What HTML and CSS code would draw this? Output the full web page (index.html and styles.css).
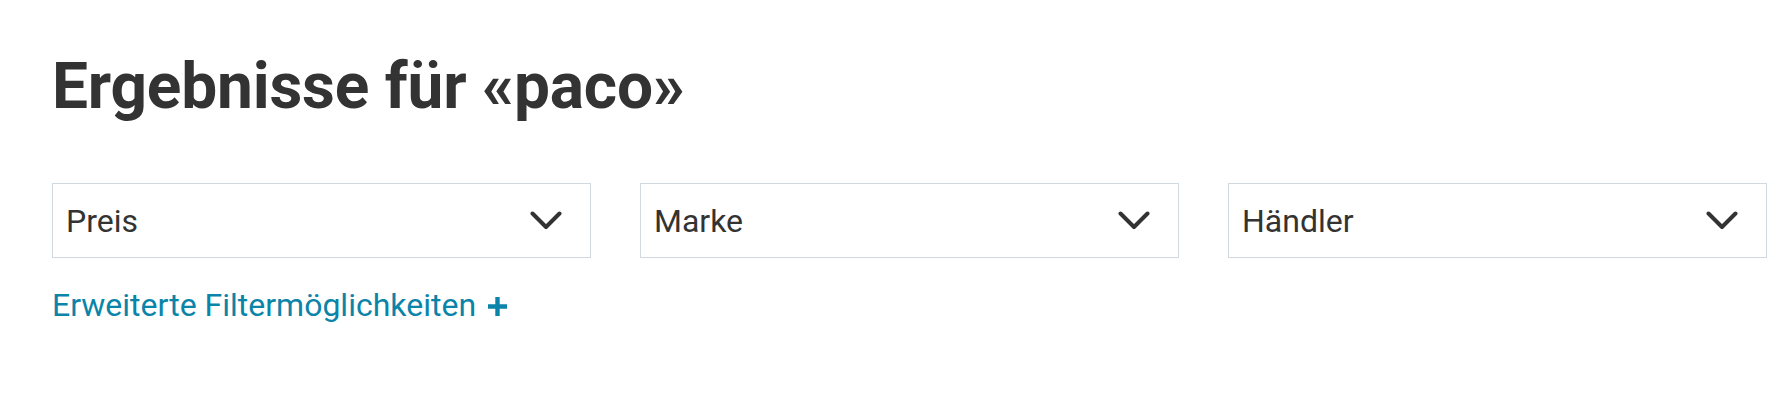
FILE: index.html
```html
<!DOCTYPE html>
<html lang="de">
<head>
<meta charset="utf-8">
<title>Ergebnisse für «paco»</title>
<link rel="stylesheet" href="styles.css">
</head>
<body>
<main class="page">
  <h1 class="title">Ergebnisse für «paco»</h1>
  <div class="filters">
    <div class="select"><span class="label">Preis</span><svg class="chev" width="32" height="19" viewBox="0 0 32 19"><polyline points="2.5,2.5 16,16 29.5,2.5" fill="none" stroke="#333" stroke-width="4" stroke-linecap="round" stroke-linejoin="round"/></svg></div>
    <div class="select"><span class="label">Marke</span><svg class="chev" width="32" height="19" viewBox="0 0 32 19"><polyline points="2.5,2.5 16,16 29.5,2.5" fill="none" stroke="#333" stroke-width="4" stroke-linecap="round" stroke-linejoin="round"/></svg></div>
    <div class="select"><span class="label">Händler</span><svg class="chev" width="32" height="19" viewBox="0 0 32 19"><polyline points="2.5,2.5 16,16 29.5,2.5" fill="none" stroke="#333" stroke-width="4" stroke-linecap="round" stroke-linejoin="round"/></svg></div>
  </div>
  <a class="more" href="#">Erweiterte Filtermöglichkeiten <svg class="plus" width="21" height="21" viewBox="0 0 21 21"><path d="M10.5 1V20M1 10.5H20" stroke="#0a84a8" stroke-width="4.4" fill="none"/></svg></a>
</main>
</body>
</html>
```
FILE: styles.css
```css
html, body {
  margin: 0;
  padding: 0;
  background: #ffffff;
}
body {
  font-family: Roboto, "Liberation Sans", sans-serif;
  color: #333333;
}
.page {
  padding: 49px 0 0 52px;
  width: 1715px;
}
.title {
  margin: 0;
  font-size: 64px;
  font-weight: 700;
  line-height: 76px;
  letter-spacing: -0.2px;
  color: #333333;
}
.filters {
  margin-top: 58px;
  display: grid;
  grid-template-columns: repeat(3, 1fr);
  column-gap: 49px;
}
.select {
  box-sizing: border-box;
  height: 75px;
  border: 1px solid #cfd9df;
  display: flex;
  align-items: center;
  justify-content: space-between;
  padding: 0 28px 0 13px;
  font-size: 32px;
  line-height: 38px;
  color: #333333;
}
.label {
  padding-top: 1px;
}
.chev {
  display: block;
}
.more {
  display: inline-flex;
  align-items: center;
  gap: 11px;
  margin-top: 28px;
  font-size: 32px;
  line-height: 38px;
  color: #0a84a8;
  text-decoration: none;
}
.plus {
  display: block;
  margin-top: 2px;
}
```
